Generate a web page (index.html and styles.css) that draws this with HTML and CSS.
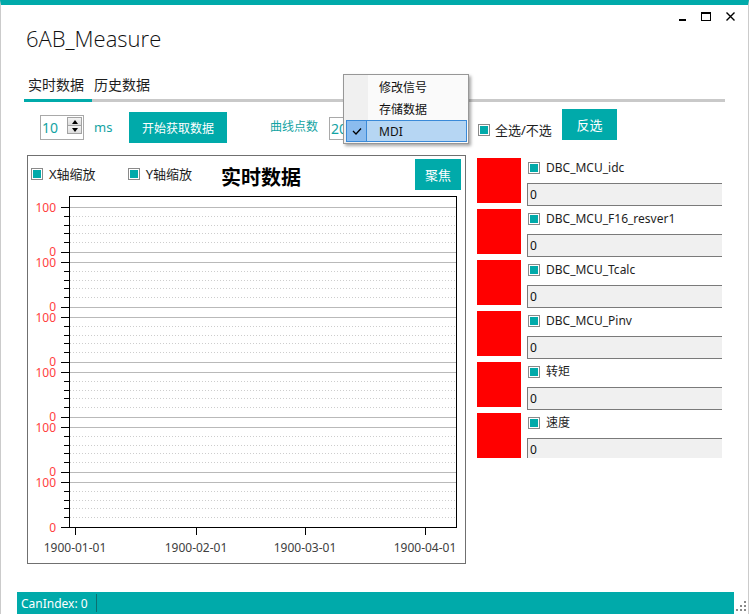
FILE: index.html
```html
<!DOCTYPE html>
<html lang="zh-CN">
<head>
<meta charset="utf-8">
<title>6AB_Measure</title>
<link rel="stylesheet" href="styles.css">
</head>
<body>
<div class="window">
  <div class="caption">
    <span class="cap-min"></span>
    <span class="cap-max"></span>
    <svg class="cap-close" width="9" height="9" viewBox="0 0 9 9"><path d="M0.5 0.5L8.5 8.5M8.5 0.5L0.5 8.5" stroke="#000" stroke-width="1.4" fill="none"/></svg>
  </div>
  <div class="title">6AB_Measure</div>
  <div class="tabs">
    <div class="tab active">实时数据</div>
    <div class="tab">历史数据</div>
  </div>
  <div class="toolbar">
    <div class="spin">
      <span class="spin-val">10</span>
      <span class="spin-btns"><span class="spin-up"></span><span class="spin-down"></span></span>
    </div>
    <span class="tool-lbl unit">ms</span>
    <button class="btn start">开始获取数据</button>
    <span class="tool-lbl points">曲线点数</span>
    <div class="num-input">200</div>
    <label class="chk all"><span class="box"></span>全选/不选</label>
    <button class="btn invert">反选</button>
  </div>
  <div class="main">
    <div class="chart-panel">
      <div class="chart-head">
        <label class="chk zoom-x"><span class="box"></span>X轴缩放</label>
        <label class="chk zoom-y"><span class="box"></span>Y轴缩放</label>
        <div class="chart-title">实时数据</div>
        <button class="btn focus">聚焦</button>
      </div>
      <svg class="plot" width="436" height="371" viewBox="0 0 436 371">
        <path d="M42 15.5H428M42 60.5H428M42 70.5H428M42 115.5H428M42 125.5H428M42 170.5H428M42 180.5H428M42 225.5H428M42 235.5H428M42 280.5H428M42 290.5H428" stroke="#b9b9b9" stroke-width="1" fill="none"/>
        <path d="M42 24.5H428M42 33.5H428M42 41.5H428M42 50.5H428M42 79.5H428M42 88.5H428M42 96.5H428M42 105.5H428M42 134.5H428M42 143.5H428M42 151.5H428M42 160.5H428M42 189.5H428M42 198.5H428M42 206.5H428M42 215.5H428M42 244.5H428M42 253.5H428M42 261.5H428M42 270.5H428M42 299.5H428M42 308.5H428M42 316.5H428M42 325.5H428" stroke="#cdcdcd" stroke-width="1" stroke-dasharray="1 2" fill="none"/>
        <path d="M33 15.5H41M33 60.5H41M33 70.5H41M33 115.5H41M33 125.5H41M33 170.5H41M33 180.5H41M33 225.5H41M33 235.5H41M33 280.5H41M33 290.5H41M33 335.5H41" stroke="#000" stroke-width="1" fill="none"/>
        <path d="M36 24.5H41M36 33.5H41M36 41.5H41M36 50.5H41M36 79.5H41M36 88.5H41M36 96.5H41M36 105.5H41M36 134.5H41M36 143.5H41M36 151.5H41M36 160.5H41M36 189.5H41M36 198.5H41M36 206.5H41M36 215.5H41M36 244.5H41M36 253.5H41M36 261.5H41M36 270.5H41M36 299.5H41M36 308.5H41M36 316.5H41M36 325.5H41" stroke="#000" stroke-width="1" fill="none"/>
        <path d="M47.5 336V343M168.5 336V343M277.5 336V343M397.5 336V343" stroke="#000" stroke-width="1" fill="none"/>
        <rect x="41.5" y="4.5" width="387" height="331" fill="none" stroke="#000" stroke-width="1"/>
        <g class="ylab" text-anchor="end">
          <text x="28" y="19.5">100</text><text x="28" y="64">0</text>
          <text x="28" y="75">100</text><text x="28" y="119">0</text>
          <text x="28" y="130">100</text><text x="28" y="174">0</text>
          <text x="28" y="185">100</text><text x="28" y="229">0</text>
          <text x="28" y="240">100</text><text x="28" y="284">0</text>
          <text x="28" y="295">100</text><text x="28" y="339.5">0</text>
        </g>
        <g class="xlab" text-anchor="middle">
          <text x="47" y="360">1900-01-01</text>
          <text x="168" y="360">1900-02-01</text>
          <text x="277" y="360">1900-03-01</text>
          <text x="397" y="360">1900-04-01</text>
        </g>
      </svg>
    </div>
    <div class="signals">
      <div class="sig">
        <div class="swatch"></div>
        <div class="sig-body">
          <label class="chk"><span class="box"></span>DBC_MCU_idc</label>
          <div class="sig-val">0</div>
        </div>
      </div>
      <div class="sig">
        <div class="swatch"></div>
        <div class="sig-body">
          <label class="chk"><span class="box"></span>DBC_MCU_F16_resver1</label>
          <div class="sig-val">0</div>
        </div>
      </div>
      <div class="sig">
        <div class="swatch"></div>
        <div class="sig-body">
          <label class="chk"><span class="box"></span>DBC_MCU_Tcalc</label>
          <div class="sig-val">0</div>
        </div>
      </div>
      <div class="sig">
        <div class="swatch"></div>
        <div class="sig-body">
          <label class="chk"><span class="box"></span>DBC_MCU_Pinv</label>
          <div class="sig-val">0</div>
        </div>
      </div>
      <div class="sig">
        <div class="swatch"></div>
        <div class="sig-body">
          <label class="chk"><span class="box"></span>转矩</label>
          <div class="sig-val">0</div>
        </div>
      </div>
      <div class="sig">
        <div class="swatch"></div>
        <div class="sig-body">
          <label class="chk"><span class="box"></span>速度</label>
          <div class="sig-val">0</div>
        </div>
      </div>
    </div>
  </div>
  <div class="statusrow">
    <div class="status"><span class="status-text">CanIndex: 0</span><span class="status-sep"></span></div>
    <svg class="grip" width="10" height="11" viewBox="0 0 10 11"><g fill="#8a8a8a"><rect x="8" y="1" width="2" height="2"/><rect x="4" y="5" width="2" height="2"/><rect x="8" y="5" width="2" height="2"/><rect x="0" y="9" width="2" height="2"/><rect x="4" y="9" width="2" height="2"/><rect x="8" y="9" width="2" height="2"/></g></svg>
  </div>
  <div class="menu">
    <div class="menu-item">修改信号</div>
    <div class="menu-item">存储数据</div>
    <div class="menu-item checked"><span class="menu-check"><svg width="10" height="8" viewBox="0 0 10 8"><path d="M1 4L4 7L9 1.5" stroke="#000" stroke-width="1.3" fill="none"/></svg></span>MDI</div>
  </div>
</div>
</body>
</html>
```

FILE: styles.css
```css
* { box-sizing: border-box; }
html, body { margin: 0; padding: 0; }
body {
  width: 749px;
  height: 614px;
  overflow: hidden;
  background: #fff;
  font-family: "Noto Sans", "Noto Sans CJK SC", sans-serif;
  font-size: 12px;
  color: #1e1e1e;
}
.window {
  position: relative;
  width: 749px;
  height: 614px;
  border-top: 5px solid #00aaaa;
  border-left: 1px solid #cbcbcb;
  border-right: 1px solid #cbcbcb;
  display: flex;
  flex-direction: column;
}

/* caption buttons */
.caption {
  height: 20px;
  display: flex;
  justify-content: flex-end;
  align-items: flex-start;
  padding: 7px 13px 0 0;
  gap: 15px;
}
.cap-min { width: 7px; height: 9px; border-bottom: 2px solid #000; }
.cap-max { width: 10px; height: 9px; border: 1px solid #000; border-top-width: 2px; }
.cap-close { display: block; }

.title {
  margin-left: 25px;
  height: 26px;
  font-family: "Open Sans", "Noto Sans", sans-serif;
  font-weight: 300;
  font-size: 22px;
  line-height: 26px;
  color: #111;
}

/* tabs */
.tabs {
  display: flex;
  margin: 24px 23px 0 23px;
  border-bottom: 3px solid #c9c9c9;
}
.tab {
  font-size: 14px;
  line-height: 20px;
  padding: 0 2px 4px 2px;
  color: #1e1e1e;
}
.tab.active {
  padding: 0 8px 4px 4px;
  border-bottom: 3px solid #00aaaa;
  margin-bottom: -3px;
}

/* toolbar */
.toolbar {
  display: flex;
  align-items: flex-start;
  height: 41px;
  padding-top: 7px;
}
.spin {
  display: flex;
  width: 44px;
  height: 25px;
  margin: 6px 0 0 39px;
  border: 1px solid #a9a9a9;
}
.spin-val {
  flex: 1;
  color: #13a3a3;
  font-size: 14px;
  line-height: 23px;
  padding-left: 1px;
}
.spin-btns {
  display: flex;
  flex-direction: column;
  width: 15px;
  margin: 1px 1px 0 0;
}
.spin-up, .spin-down {
  display: flex;
  align-items: center;
  justify-content: center;
  border: 1px solid #a3a3a3;
  background: linear-gradient(#f4f4f4, #dedede);
}
.spin-up { height: 9px; }
.spin-down { height: 9px; margin-top: -1px; }
.spin-up::after {
  content: "";
  border-left: 3px solid transparent;
  border-right: 3px solid transparent;
  border-bottom: 4px solid #000;
}
.spin-down::after {
  content: "";
  border-left: 3px solid transparent;
  border-right: 3px solid transparent;
  border-top: 4px solid #000;
}
.tool-lbl {
  color: #13a3a3;
  line-height: 20px;
  margin-top: 8px;
  white-space: nowrap;
}
.unit { margin-left: 10px; width: 17px; font-size: 13px; }
.points { margin-left: 43px; width: 48px; font-size: 12px; }

.btn {
  border: none;
  background: #00aaaa;
  color: #fff;
  font-family: "Noto Sans", "Noto Sans CJK SC", sans-serif;
  padding: 0;
  cursor: default;
}
.start {
  margin: 3px 0 0 18px;
  width: 98px;
  height: 31px;
  font-size: 12px;
}
.num-input {
  margin: 8px 0 0 11px;
  width: 52px;
  height: 23px;
  border: 1px solid #a9a9a9;
  color: #13a3a3;
  font-size: 14px;
  line-height: 21px;
  padding-left: 1px;
}
.invert {
  margin-left: 8px;
  width: 55px;
  height: 31px;
  font-size: 13px;
}

/* checkbox */
.chk {
  display: flex;
  align-items: center;
  gap: 6px;
  font-size: 13px;
  line-height: 16px;
  color: #1e1e1e;
  white-space: nowrap;
}
.box {
  flex: none;
  width: 12px;
  height: 12px;
  border: 1px solid #8a8a8a;
  box-shadow: inset 0 0 0 1px #fff;
  background: #00aaaa;
}
.toolbar .all { margin: 13px 0 0 97px; width: 76px; gap: 5px; }

/* main area */
.main {
  display: flex;
  align-items: flex-start;
  margin: 12px 0 0 26px;
}
.chart-panel {
  width: 439px;
  height: 409px;
  border: 1px solid #707070;
}
.chart-head {
  display: flex;
  align-items: center;
  height: 36px;
  padding: 0 3px;
}
.zoom-y { margin-left: 32px; }
.chart-title {
  margin: 7px 0 0 29px;
  font-size: 20px;
  font-weight: bold;
  line-height: 24px;
  color: #000;
}
.focus {
  margin-left: auto;
  margin-right: 1px;
  width: 46px;
  height: 31px;
  font-size: 13px;
}
.plot { display: block; }
.ylab { font-family: "Noto Sans", sans-serif; font-size: 12px; fill: #ff4040; }
.xlab { font-family: "Noto Sans", sans-serif; font-size: 12px; fill: #404040; }

/* signal list */
.signals {
  display: flex;
  flex-direction: column;
  gap: 6px;
  width: 245px;
  margin: 3px 0 0 11px;
  overflow: hidden;
}
.sig { display: flex; height: 45px; }
.swatch { flex: none; width: 44px; height: 45px; background: #ff0000; }
.sig-body { flex: none; width: 212px; margin-left: 6px; }
.sig-body .chk { margin: 2px 0 0 1px; font-size: 12px; }
.sig-val {
  margin-top: 7px;
  width: 212px;
  height: 23px;
  border: 1px solid #7a7a7a;
  background: #f0f0f0;
  padding-left: 2px;
  font-size: 12px;
  line-height: 21px;
  color: #111;
}

/* status bar */
.statusrow {
  margin-top: auto;
  display: flex;
  margin-left: 16px;
  height: 22px;
}
.status {
  width: 717px;
  background: #00aaaa;
  display: flex;
  align-items: center;
  color: #fff;
}
.status-text { width: 79px; padding-left: 4px; font-size: 12px; }
.status-sep { width: 1px; height: 18px; background: #0d6f6f; }
.grip { margin: 8px 0 0 2px; display: block; }

/* context menu */
.menu {
  position: absolute;
  left: 342px;
  top: 69px;
  width: 126px;
  height: 70px;
  border: 1px solid #979797;
  background: linear-gradient(to right, #f0f0f0 0, #f0f0f0 24px, #fafafa 24px);
  padding: 1px 1px 0 2px;
  box-shadow: 2px 2px 3px rgba(0, 0, 0, 0.35);
  font-size: 12px;
  color: #111;
}
.menu-item {
  display: flex;
  align-items: center;
  height: 22px;
  padding-left: 33px;
}
.menu-item.checked {
  padding-left: 0;
  background: #b6d6f3;
  border: 1px solid #3a8ad8;
}
.menu-check {
  display: flex;
  align-items: center;
  justify-content: center;
  width: 21px;
  height: 22px;
  margin: -1px 12px -1px -1px;
  background: #8bbcee;
  border: 1px solid #3a8ad8;
}
```
